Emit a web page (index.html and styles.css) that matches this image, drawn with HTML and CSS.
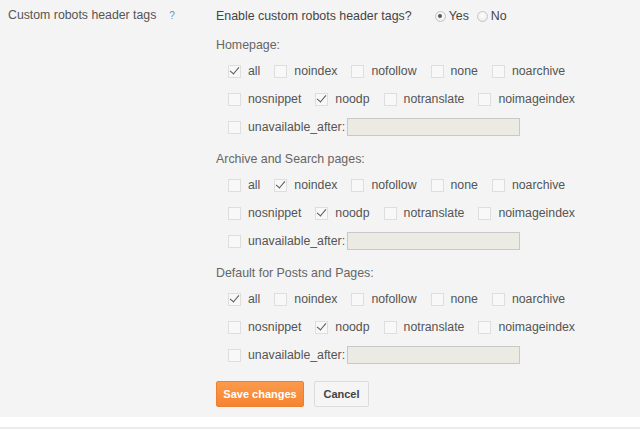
FILE: index.html
```html
<!DOCTYPE html>
<html>
<head>
<meta charset="utf-8">
<link rel="stylesheet" href="styles.css">
</head>
<body>
<div class="panel">
  <div class="side">
    <span class="side-label">Custom robots header tags</span>
    <span class="help">?</span>
  </div>
  <div class="main">
    <div class="enable">
      <span class="enable-q">Enable custom robots header tags?</span>
      <span class="radio on"></span><span class="rlabel">Yes</span>
      <span class="radio"></span><span class="rlabel">No</span>
    </div>

    <div class="group">
      <div class="heading">Homepage:</div>
      <div class="row">
        <span class="opt"><span class="cb on"></span>all</span>
        <span class="opt"><span class="cb"></span>noindex</span>
        <span class="opt"><span class="cb"></span>nofollow</span>
        <span class="opt"><span class="cb"></span>none</span>
        <span class="opt"><span class="cb"></span>noarchive</span>
      </div>
      <div class="row">
        <span class="opt"><span class="cb"></span>nosnippet</span>
        <span class="opt"><span class="cb on"></span>noodp</span>
        <span class="opt"><span class="cb"></span>notranslate</span>
        <span class="opt"><span class="cb"></span>noimageindex</span>
      </div>
      <div class="row">
        <span class="opt ua"><span class="cb"></span>unavailable_after:</span>
        <input class="date" type="text" disabled>
      </div>
    </div>

    <div class="group">
      <div class="heading">Archive and Search pages:</div>
      <div class="row">
        <span class="opt"><span class="cb"></span>all</span>
        <span class="opt"><span class="cb on"></span>noindex</span>
        <span class="opt"><span class="cb"></span>nofollow</span>
        <span class="opt"><span class="cb"></span>none</span>
        <span class="opt"><span class="cb"></span>noarchive</span>
      </div>
      <div class="row">
        <span class="opt"><span class="cb"></span>nosnippet</span>
        <span class="opt"><span class="cb on"></span>noodp</span>
        <span class="opt"><span class="cb"></span>notranslate</span>
        <span class="opt"><span class="cb"></span>noimageindex</span>
      </div>
      <div class="row">
        <span class="opt ua"><span class="cb"></span>unavailable_after:</span>
        <input class="date" type="text" disabled>
      </div>
    </div>

    <div class="group">
      <div class="heading">Default for Posts and Pages:</div>
      <div class="row">
        <span class="opt"><span class="cb on"></span>all</span>
        <span class="opt"><span class="cb"></span>noindex</span>
        <span class="opt"><span class="cb"></span>nofollow</span>
        <span class="opt"><span class="cb"></span>none</span>
        <span class="opt"><span class="cb"></span>noarchive</span>
      </div>
      <div class="row">
        <span class="opt"><span class="cb"></span>nosnippet</span>
        <span class="opt"><span class="cb on"></span>noodp</span>
        <span class="opt"><span class="cb"></span>notranslate</span>
        <span class="opt"><span class="cb"></span>noimageindex</span>
      </div>
      <div class="row">
        <span class="opt ua"><span class="cb"></span>unavailable_after:</span>
        <input class="date" type="text" disabled>
      </div>
    </div>

    <div class="buttons">
      <button class="btn save">Save changes</button>
      <button class="btn cancel">Cancel</button>
    </div>
  </div>
</div>
<div class="footer"></div>
</body>
</html>
```
FILE: styles.css
```css
html, body {
  margin: 0;
  padding: 0;
  background: #ffffff;
  font-family: "Liberation Sans", Arial, sans-serif;
  color: #555555;
}

.panel {
  background: #f4f4f4;
  display: flex;
  align-items: flex-start;
  padding: 0 0 10px 0;
}

.side {
  width: 208px;
  flex-shrink: 0;
  padding-left: 8px;
  height: 30px;
  display: flex;
  align-items: center;
  font-size: 12.3px;
  color: #555;
}

.side-label {
  margin-right: 13px;
}

.help {
  color: #6d8fc4;
  font-size: 10px;
}

.main {
  display: flex;
  flex-direction: column;
}

.main > * {
  flex-shrink: 0;
}

.enable {
  height: 32px;
  display: flex;
  align-items: center;
  font-size: 12.4px;
  color: #444;
  margin-bottom: 1px;
}

.enable-q {
  margin-right: 23px;
}

.radio {
  width: 9px;
  height: 9px;
  border-radius: 50%;
  border: 1px solid #c6c6c6;
  background: radial-gradient(circle at 50% 40%, #ffffff 0%, #e6e6e6 100%);
  margin-right: 3px;
  position: relative;
  box-sizing: content-box;
}

.radio.on::after {
  content: "";
  position: absolute;
  left: 2.5px;
  top: 2.5px;
  width: 4px;
  height: 4px;
  border-radius: 50%;
  background: #555;
}

.rlabel {
  margin-right: 8px;
  color: #444;
}

.group {
  height: 108px;
  margin-bottom: 6px;
}

.heading {
  height: 24px;
  display: flex;
  align-items: center;
  font-size: 12.4px;
  color: #666;
}

.row {
  height: 28px;
  display: flex;
  align-items: center;
  padding-left: 12px;
  font-size: 12.3px;
  color: #555;
}

.opt {
  display: flex;
  align-items: center;
  margin-right: 14px;
}

.opt.ua {
  margin-right: 2px;
}

.cb {
  width: 11px;
  height: 11px;
  border: 1px solid #dedede;
  background: #f8f8f8;
  margin-right: 7px;
  position: relative;
  box-sizing: content-box;
}

.cb.on::after {
  content: "";
  position: absolute;
  left: 3px;
  top: -1px;
  width: 4px;
  height: 8px;
  border-right: 1.5px solid #555;
  border-bottom: 1.5px solid #555;
  transform: rotate(40deg);
}

.date {
  width: 173px;
  height: 18px;
  box-sizing: border-box;
  border: 1px solid #c8c8c8;
  background: #ebebe4;
  margin: 0;
  padding: 0;
}

.buttons {
  margin-top: 6px;
  display: flex;
  gap: 10px;
}

.btn {
  height: 26px;
  font-family: "Liberation Sans", Arial, sans-serif;
  font-size: 11px;
  font-weight: bold;
  border-radius: 2px;
  padding: 0;
  margin: 0;
  white-space: nowrap;
}

.save {
  width: 88px;
  color: #ffffff;
  background: linear-gradient(#fb9a4b, #f68432);
  border: 1px solid #ee7f2d;
}

.cancel {
  width: 55px;
  color: #444;
  background: #f5f5f5;
  border: 1px solid #dcdcdc;
}

.footer {
  height: 12px;
  background: #ffffff;
  box-sizing: border-box;
  border-bottom: 2px solid #ececec;
  margin-bottom: 4px;
}
```
